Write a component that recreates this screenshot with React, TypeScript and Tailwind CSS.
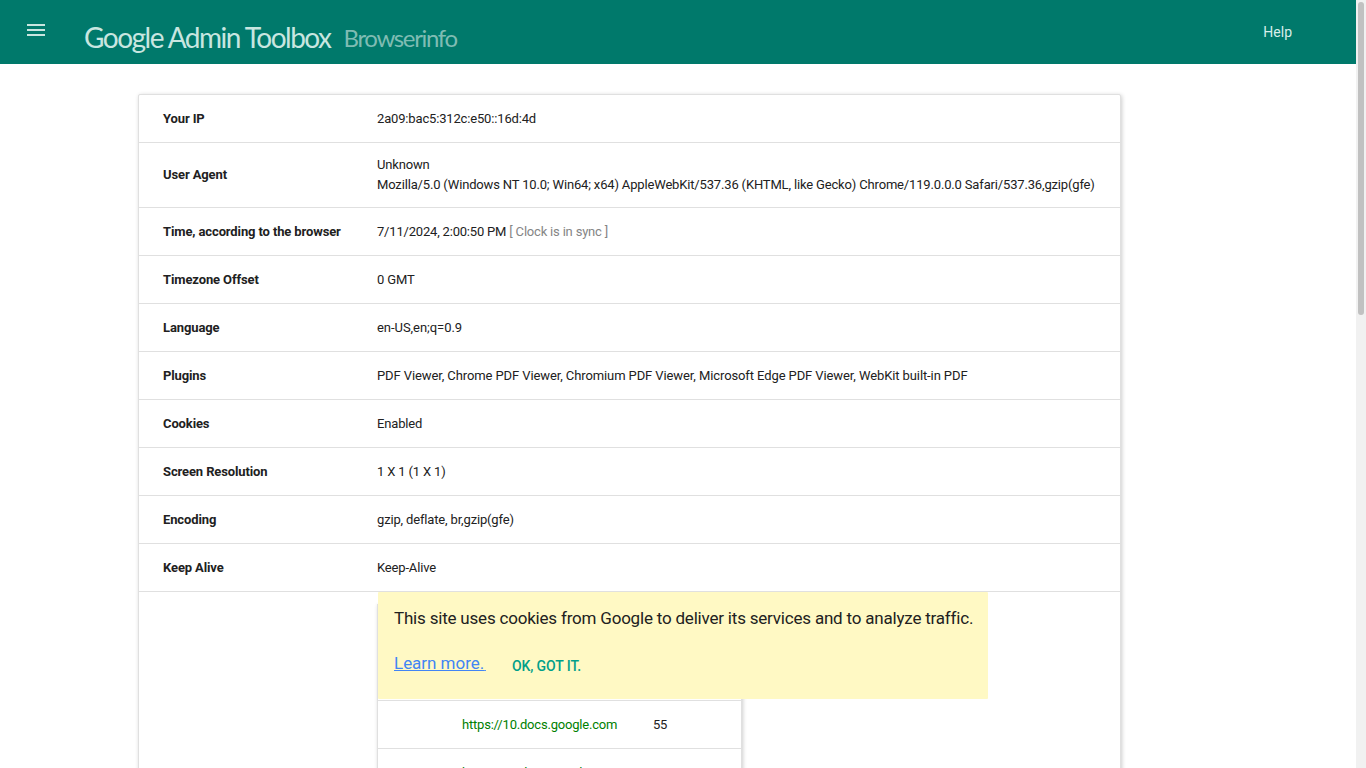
const rows = [
  { label: 'Your IP', value: '2a09:bac5:312c:e50::16d:4d' },
  {
    label: 'User Agent',
    value: (
      <>
        Unknown
        <br />
        Mozilla/5.0 (Windows NT 10.0; Win64; x64) AppleWebKit/537.36 (KHTML, like Gecko) Chrome/119.0.0.0 Safari/537.36,gzip(gfe)
      </>
    ),
  },
  {
    label: 'Time, according to the browser',
    value: (
      <span className="tracking-[-0.19px]">
        7/11/2024, 2:00:50 PM <span className="text-[#858585]">[ Clock is in sync ]</span>
      </span>
    ),
  },
  { label: 'Timezone Offset', value: '0 GMT' },
  { label: 'Language', value: <span className="tracking-[-0.05px]">en-US,en;q=0.9</span> },
  {
    label: 'Plugins',
    value: <span className="tracking-[-0.1px]">PDF Viewer, Chrome PDF Viewer, Chromium PDF Viewer, Microsoft Edge PDF Viewer, WebKit built-in PDF</span>,
  },
  { label: 'Cookies', value: 'Enabled' },
  { label: 'Screen Resolution', value: '1 X 1 (1 X 1)' },
  { label: 'Encoding', value: 'gzip, deflate, br,gzip(gfe)' },
  { label: 'Keep Alive', value: 'Keep-Alive' },
];

const docs = [
  { url: 'https://8.docs.google.com', ms: '61' },
  { url: 'https://9.docs.google.com', ms: '58' },
  { url: 'https://10.docs.google.com', ms: '55' },
  { url: 'https://11.docs.google.com', ms: '57' },
];

const App = () => {
  return (
    <div className="relative flex h-screen overflow-hidden bg-white font-['Roboto',sans-serif] text-[13px] leading-5 text-[#212121]">
      <div className="min-w-0 flex-1">
        <header className="flex h-16 items-start bg-[#00796b]">
          <button className="mt-6 ml-[27px] flex flex-col gap-[3px]">
            <span className="h-[2px] w-[18px] bg-[#c8e6e0]" />
            <span className="h-[2px] w-[18px] bg-[#c8e6e0]" />
            <span className="h-[2px] w-[18px] bg-[#c8e6e0]" />
          </button>
          <div className="mt-[19px] ml-[39px] flex items-baseline whitespace-nowrap font-['Lato',sans-serif] font-normal">
            <span className="text-[28px] leading-9 tracking-[-1.5px] text-[#c8e6e0]">Google Admin Toolbox</span>
            <span className="ml-[13px] -translate-y-px text-[24px] leading-9 tracking-[-1.35px] text-[#7fbcb3]">Browserinfo</span>
          </div>
          <a className="mt-[22px] ml-auto mr-[64px] text-sm leading-5 text-[#d9eeea]">Help</a>
        </header>

        <main className="mt-[30px] ml-[138px] w-[983px] rounded-[2px] border border-[#e0e0e0] bg-white shadow-[1px_1px_4px_rgba(0,0,0,0.2)]">
          {rows.map((row) => (
            <div key={row.label} className="flex min-h-[48px] items-center border-b border-[#e0e0e0] py-3 pl-6">
              <div className="w-[214px] shrink-0 font-bold tracking-[-0.12px]">{row.label}</div>
              <div className="tracking-[-0.16px]">{row.value}</div>
            </div>
          ))}
          <div className="pt-3 pl-[238px]">
            <div className="w-[365px] border border-[#e0e0e0] bg-white shadow-[1px_1px_4px_rgba(0,0,0,0.2)]">
              {docs.map((doc) => (
                <div key={doc.url} className="flex h-12 items-center border-b border-[#e0e0e0] pl-[84px] tracking-[-0.2px]">
                  <a className="w-[191px] text-[#008000]">{doc.url}</a>
                  <span>{doc.ms}</span>
                </div>
              ))}
            </div>
          </div>
        </main>
      </div>

      <div className="w-[10px] shrink-0 bg-[#f1f1f1] px-[2px] pt-[2px]">
        <div className="h-[313px] rounded-[3px] bg-[#c1c1c1]" />
      </div>

      <div className="absolute top-[592px] left-[378px] h-[107px] w-[610px] rounded-[1px] bg-[#fff9c4] pt-4 pl-4">
        <p className="text-[17px] leading-5 tracking-[-0.2px] whitespace-nowrap text-[#212121]">
          This site uses cookies from Google to deliver its services and to analyze traffic.
        </p>
        <div className="mt-[25px] flex items-baseline">
          <a className="text-[17px] leading-5 tracking-[-0.03px] text-[#4285f4] underline">Learn more.{'\u200a'}</a>
          <span className="ml-[26px] translate-y-[2px] text-sm leading-5 font-medium tracking-[-0.1px] text-[#00a08a]">OK, GOT IT.</span>
        </div>
      </div>
    </div>
  );
};

export default App;
